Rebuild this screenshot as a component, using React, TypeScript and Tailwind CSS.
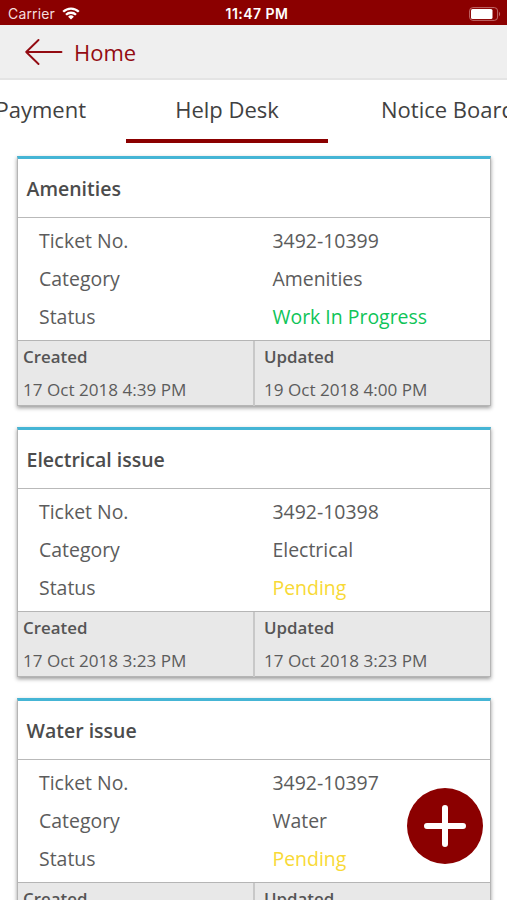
type Ticket = {
  title: string;
  number: string;
  category: string;
  status: string;
  statusClass: string;
  created: string;
  updated: string;
};

const tickets: Ticket[] = [
  { title: "Amenities", number: "3492-10399", category: "Amenities", status: "Work In Progress", statusClass: "text-[#0fc458]", created: "17 Oct 2018 4:39 PM", updated: "19 Oct 2018 4:00 PM" },
  { title: "Electrical issue", number: "3492-10398", category: "Electrical", status: "Pending", statusClass: "text-[#f8d936]", created: "17 Oct 2018 3:23 PM", updated: "17 Oct 2018 3:23 PM" },
  { title: "Water issue", number: "3492-10397", category: "Water", status: "Pending", statusClass: "text-[#f8d936]", created: "17 Oct 2018 3:23 PM", updated: "17 Oct 2018 3:23 PM" },
];

function StatusBar() {
  return (
    <div className="grid h-[25px] shrink-0 grid-cols-[1fr_auto_1fr] items-center bg-[#8b0000] pt-[2px] font-['Inter',sans-serif] text-[13px] leading-none text-white">
      <div className="flex items-center gap-[7px] pl-2">
        <span className="pt-px text-[14px] tracking-[0.15px] text-[#f3dede]">Carrier</span>
        <svg width="18" height="13" viewBox="0 0 18 13" fill="none" stroke="white" strokeWidth="2.3">
          <path d="M1.2 4.8a11 11 0 0 1 15.6 0" />
          <path d="M4 7.8a7.1 7.1 0 0 1 10 0" />
          <path d="M9 12.6 6.1 9.7a4.1 4.1 0 0 1 5.8 0Z" fill="white" stroke="none" />
        </svg>
      </div>
      <span className="pl-[7px] pt-px text-[14px] font-semibold tracking-[0.45px]">11:47 PM</span>
      <div className="flex justify-end pr-[6px]">
        <svg width="32" height="14" viewBox="0 0 32 14" fill="none">
          <rect x="0.6" y="0.6" width="28" height="12.8" rx="3.3" stroke="#c06a6a" />
          <rect x="2" y="2" width="21.5" height="10" rx="1.5" fill="white" />
          <path d="M30 4.8c1.5.7 1.5 3.7 0 4.4Z" fill="#c06a6a" />
        </svg>
      </div>
    </div>
  );
}

function Field({ label, value, valueClass = "" }: { label: string; value: string; valueClass?: string }) {
  return (
    <div className="grid h-[38px] grid-cols-[233.5px_1fr] items-center pl-[21px]">
      <span>{label}</span>
      <span className={valueClass}>{value}</span>
    </div>
  );
}

function TicketCard({ ticket }: { ticket: Ticket }) {
  return (
    <article className="flex h-[250px] shrink-0 flex-col border border-t-[3px] border-[#b5b5b5] border-t-[#45b5d5] bg-white text-[#5c5c5c] shadow-[0_2px_4px_rgba(0,0,0,0.4)]">
      <h2 className="flex h-[59px] shrink-0 items-center border-b border-[#b9b9b9] pl-[8.5px] pt-[2px] text-[19.5px] font-semibold leading-none text-[#4c4c4c]">{ticket.title}</h2>
      <div className="h-[122px] shrink-0 pt-[4px] text-[19.45px] leading-[20px]">
        <Field label="Ticket No." value={ticket.number} />
        <Field label="Category" value={ticket.category} />
        <Field label="Status" value={ticket.status} valueClass={ticket.statusClass} />
      </div>
      <div className="grid min-h-0 flex-1 grid-cols-[237px_1fr] border-t border-[#b5b5b5] bg-[#e8e8e8] text-[17.1px]">
        <div className="border-r-2 border-[#c8c8c8] pl-[5px]">
          <div className="h-[33px] text-[16.9px] font-semibold leading-[32px] text-[#555]">Created</div>
          <div className="leading-[32px]">{ticket.created}</div>
        </div>
        <div className="pl-[9px]">
          <div className="h-[33px] text-[16.9px] font-semibold leading-[32px] text-[#555]">Updated</div>
          <div className="leading-[32px]">{ticket.updated}</div>
        </div>
      </div>
    </article>
  );
}

export default function App() {
  return (
    <div className="relative flex h-[900px] w-[507px] flex-col overflow-hidden bg-white font-['Open_Sans','Noto_Sans',sans-serif]">
      <StatusBar />
      <header className="flex h-[55px] shrink-0 items-center gap-[11px] border-b-2 border-[#e4e4e4] bg-[#efefef] pl-[25px] text-[#930b12]">
        <svg width="38" height="26" viewBox="0 0 38 26" fill="none" stroke="currentColor" strokeWidth="1.9" strokeLinecap="round" strokeLinejoin="round">
          <path d="M13.5 1 1.2 13l12.3 12M1.2 13H36.5" />
        </svg>
        <span className="text-[22px] leading-none">Home</span>
      </header>
      <nav className="flex h-[63px] shrink-0 whitespace-nowrap text-[22px] text-[#414141]">
        <div className="flex w-[126px] shrink-0 justify-end pr-[40px] leading-[58px]">Payment</div>
        <div className="w-[202px] shrink-0 border-b-[4px] border-[#8b0000] text-center leading-[58px]">Help Desk</div>
        <div className="shrink-0 pl-[53px] leading-[58px]">Notice Board</div>
      </nav>
      <main className="flex flex-col gap-[21px] pl-[17px] pr-[16px] pt-[13px]">
        {tickets.map((ticket) => (
          <TicketCard key={ticket.number} ticket={ticket} />
        ))}
      </main>
      <button aria-label="Add ticket" className="absolute left-[407px] top-[788px] flex size-[76px] items-center justify-center rounded-full bg-[#8b0000]">
        <svg width="44" height="44" viewBox="0 0 44 44" stroke="white" strokeWidth="6" strokeLinecap="round">
          <path d="M22 4v36M4 22h36" />
        </svg>
      </button>
    </div>
  );
}
